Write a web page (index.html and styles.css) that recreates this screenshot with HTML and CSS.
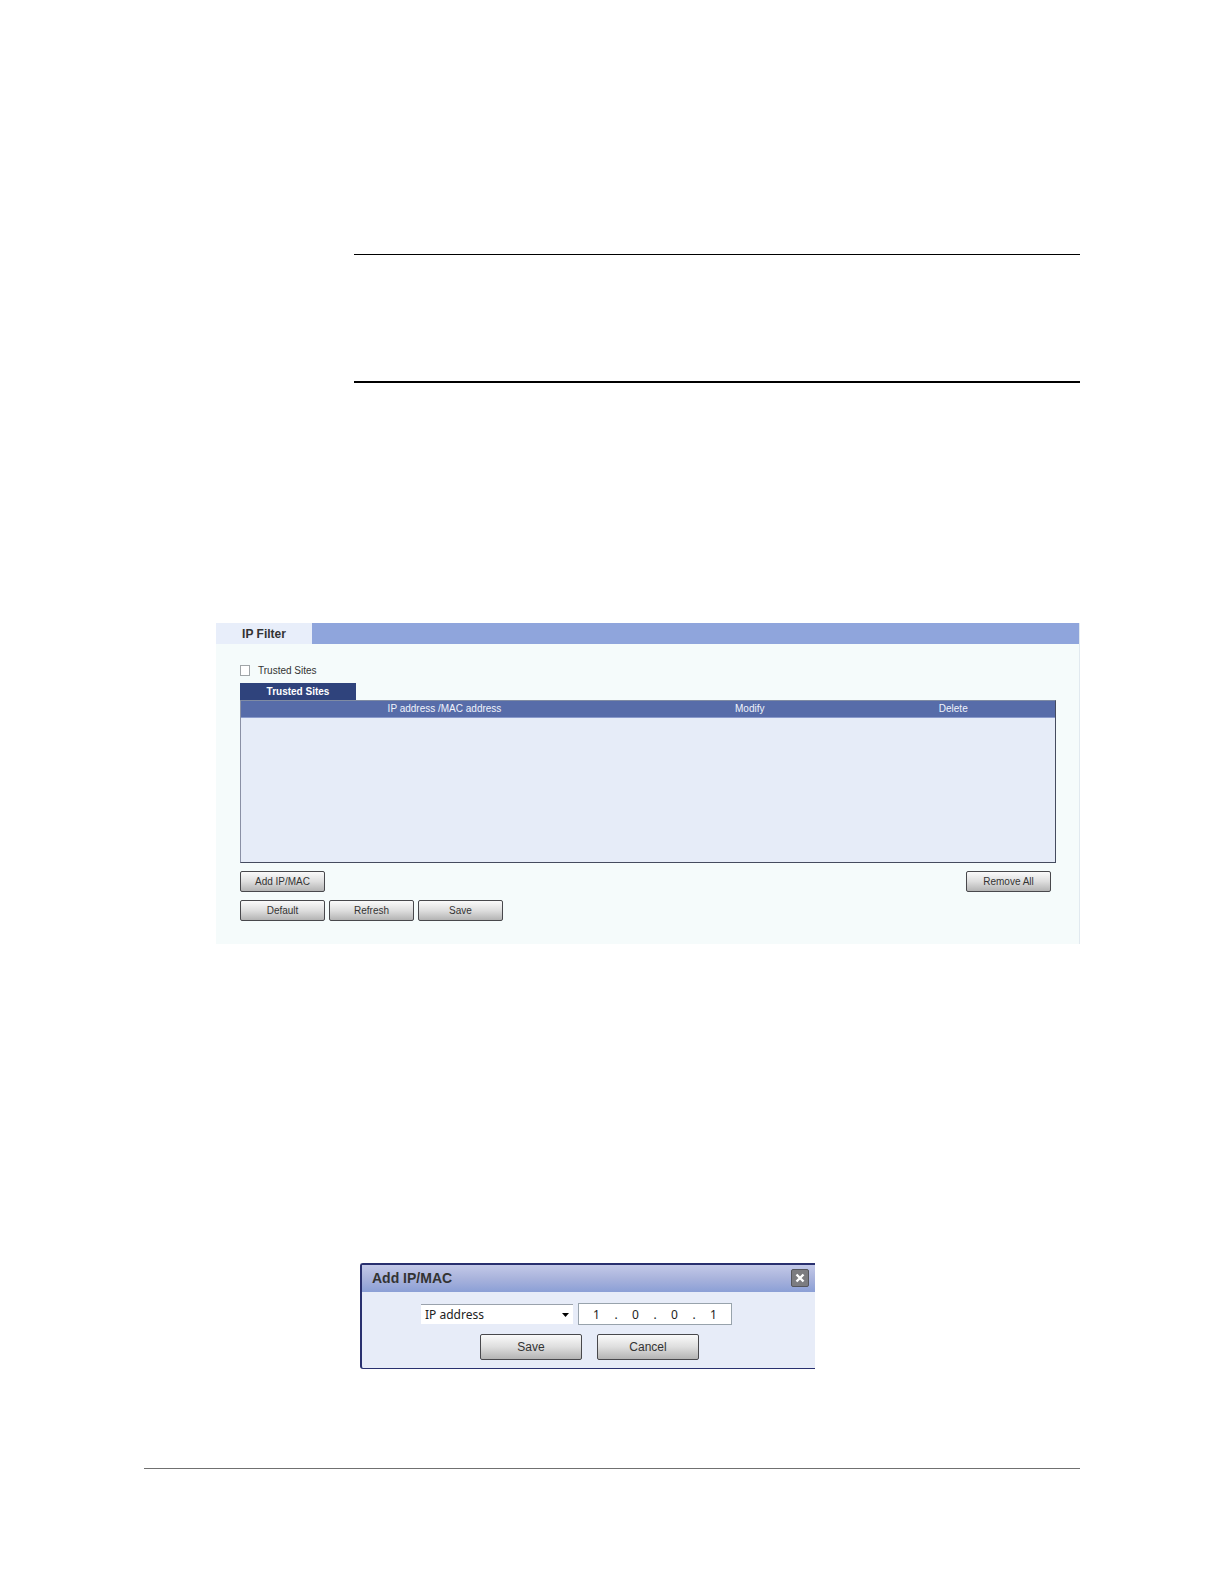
FILE: index.html
```
<!DOCTYPE html>
<html lang="en">
<head>
    <meta charset="UTF-8">
    <meta name="viewport" content="width=device-width, initial-scale=1.0">
    <title>IP Filter</title>
    <link rel="stylesheet" href="styles.css">
</head>
<body>
<main class="page">
    <section class="note"></section>

    <section class="panel">
        <header class="panel-bar">
            <h1>IP Filter</h1>
        </header>
        <div class="panel-body">
            <div class="trusted">
                <input type="checkbox" id="trusted">
                <label for="trusted">Trusted Sites</label>
            </div>
            <button type="button" class="tab">Trusted Sites</button>
            <div class="list">
                <table>
                    <thead>
                        <tr>
                            <th class="address">IP address /MAC address</th>
                            <th>Modify</th>
                            <th>Delete</th>
                        </tr>
                    </thead>
                </table>
            </div>
            <div class="buttons spread">
                <button type="button" class="btn">Add IP/MAC</button>
                <button type="button" class="btn">Remove All</button>
            </div>
            <div class="buttons">
                <button type="button" class="btn">Default</button>
                <button type="button" class="btn">Refresh</button>
                <button type="button" class="btn">Save</button>
            </div>
        </div>
    </section>

    <form class="dialog">
        <header class="dialog-bar">
            <h2>Add IP/MAC</h2>
            <button type="button" class="close" aria-label="Close">
                <svg width="10" height="10" viewBox="0 0 10 10"><path d="M1.5 1.5l7 7M8.5 1.5l-7 7" stroke="#fff" stroke-width="2.4"/></svg>
            </button>
        </header>
        <div class="fields">
            <div class="select">
                <select id="type" aria-label="Address type">
                    <option>IP address</option>
                    <option>MAC address</option>
                </select>
                <svg class="arrow" width="7" height="4" viewBox="0 0 7 4"><path d="M0 0h7L3.5 4z"/></svg>
            </div>
            <div class="ip">
                <input type="text" value="1" maxlength="3" aria-label="First octet">
                <span>.</span>
                <input type="text" value="0" maxlength="3" aria-label="Second octet">
                <span>.</span>
                <input type="text" value="0" maxlength="3" aria-label="Third octet">
                <span>.</span>
                <input type="text" value="1" maxlength="3" aria-label="Fourth octet">
            </div>
        </div>
        <div class="actions">
            <button type="button" class="btn large">Save</button>
            <button type="button" class="btn large">Cancel</button>
        </div>
    </form>

    <hr class="foot">
</main>
</body>
</html>
```
FILE: styles.css
```
* {
    box-sizing: border-box;
}
body {
    margin: 0;
    background-color: #fff;
    color: #333;
    font-family: "Liberation Sans", Arial, sans-serif;
    font-size: 10px;
}
.page {
    padding: 254px 144px 115px;
}
h1, h2 {
    margin: 0;
}
button, input, select {
    margin: 0;
    padding: 0;
    font-family: inherit;
    font-size: inherit;
    color: inherit;
}

/* ruled note */
.note {
    height: 129px;
    margin-left: 210px;
    border-top: 1px solid #000;
    border-bottom: 2px solid #000;
}

/* IP filter panel */
.panel {
    margin: 240px 0 0 72px;
    background-color: #f5fbfb;
    border-right: 1px solid #e1e9ef;
}
.panel-bar {
    height: 21px;
    background-color: #8fa5dc;
}
.panel-bar h1 {
    width: 96px;
    height: 21px;
    font-size: 12px;
    line-height: 22px;
    text-align: center;
    background-color: #e8eefa;
}
.panel-body {
    padding: 19px 23px 23px 24px;
}
.trusted {
    display: flex;
    align-items: center;
    gap: 8px;
    height: 15px;
    margin-bottom: 5px;
}
.trusted input {
    appearance: none;
    width: 10px;
    height: 11px;
    border: 1px solid #a0a5a8;
    background-color: #fff;
}
.tab {
    display: block;
    width: 116px;
    height: 17px;
    border: none;
    background-color: #2f437c;
    color: #fff;
    font-weight: bold;
}
.list {
    height: 163px;
    border: 1px solid #454b5f;
    border-top-color: #7f8ba4;
    border-left-color: #8a90a5;
    background-color: #e6ecf8;
}
.list table {
    width: 100%;
    border-spacing: 0;
    table-layout: fixed;
}
.list th {
    height: 17px;
    padding: 0;
    border-bottom: 1px solid #8a9acb;
    background-color: #576ca9;
    color: #f0f3fc;
    font-weight: normal;
    line-height: 16px;
}
.list .address {
    width: 50%;
}
.buttons {
    display: flex;
    gap: 4px;
    margin-top: 8px;
}
.spread {
    justify-content: space-between;
    padding-right: 5px;
}
.btn {
    width: 85px;
    height: 21px;
    border: 1px solid #48484c;
    border-radius: 2px;
    background: linear-gradient(#fafafa, #dedede 50%, #b4b4b4);
}

/* add address dialog */
.dialog {
    max-width: 455px;
    margin: 319px 0 0 216px;
    border: solid #29306f;
    border-width: 2px 0 1px 2px;
    border-radius: 3px 0 0 3px;
    background-color: #e7ecf8;
}
.dialog-bar {
    display: flex;
    align-items: center;
    justify-content: space-between;
    height: 27px;
    padding: 0 6px 1px 10px;
    background: linear-gradient(#c3c9e8, #a9b3dc 50%, #8b9fd6);
}
.dialog-bar h2 {
    font-size: 14px;
}
.close {
    display: flex;
    align-items: center;
    justify-content: center;
    width: 18px;
    height: 18px;
    border: 1px solid #55565c;
    border-radius: 2px;
    background-color: #7c7c80;
}
.fields {
    display: flex;
    align-items: center;
    gap: 5px;
    margin: 11px 0 0 59px;
    color: #222;
    font-family: "Noto Sans", Tahoma, sans-serif;
    font-size: 12px;
}
.select {
    position: relative;
}
.select select {
    appearance: none;
    display: block;
    width: 152px;
    height: 20px;
    padding-left: 4px;
    border: none;
    border-top: 1px solid #9aa2ac;
    border-radius: 0;
    background-color: #fff;
}
.arrow {
    position: absolute;
    top: 9px;
    right: 4px;
    pointer-events: none;
}
.ip {
    display: flex;
    align-items: center;
    justify-content: center;
    width: 154px;
    height: 22px;
    border: 1px solid #98a3ac;
    background-color: #fff;
}
.ip input {
    width: 29px;
    height: 18px;
    border: none;
    background: none;
    text-align: center;
}
.ip span {
    width: 10px;
    text-align: center;
}
.actions {
    display: flex;
    gap: 15px;
    padding: 9px 0 8px 118px;
}
.large {
    width: 102px;
    height: 26px;
    font-size: 12px;
}

.foot {
    height: 1px;
    margin: 99px 0 0;
    border: none;
    background-color: #707070;
}
```
